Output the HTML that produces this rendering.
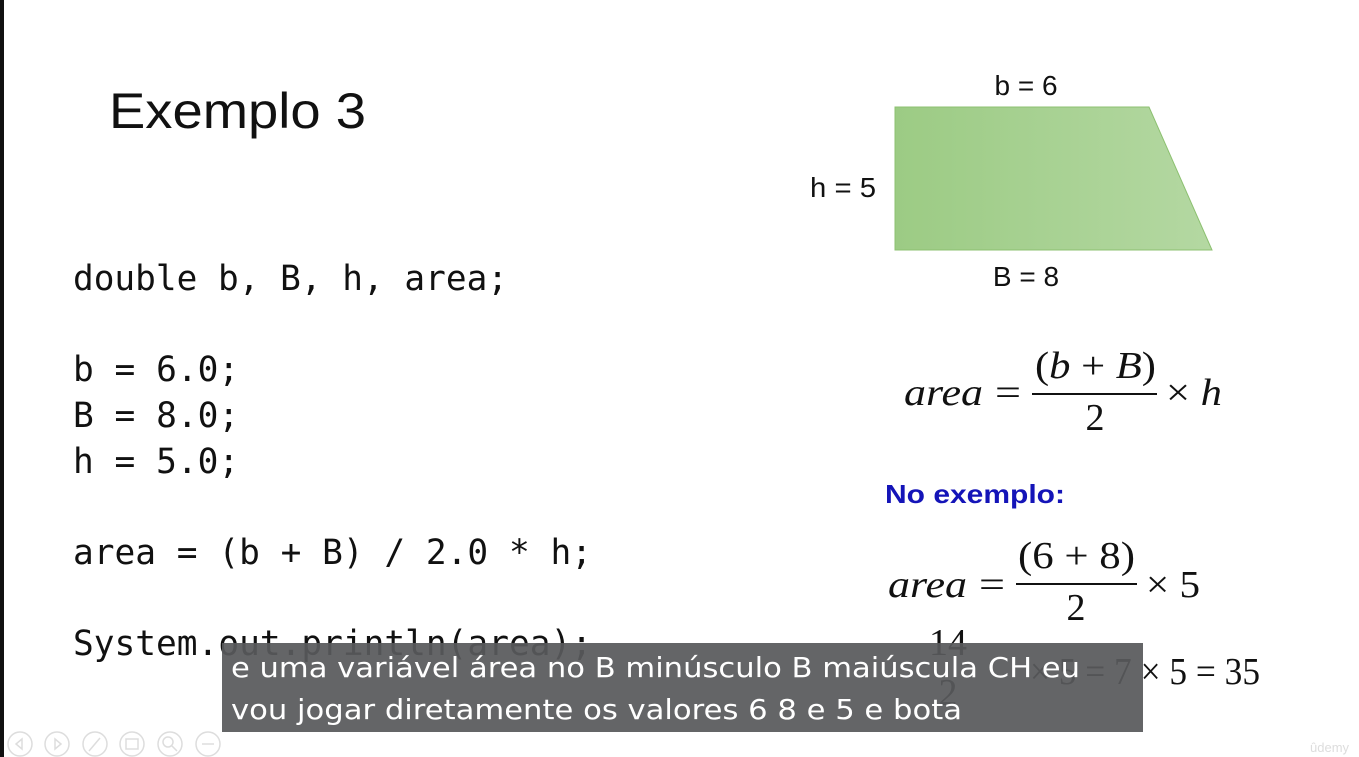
<!DOCTYPE html>
<html><head><meta charset="utf-8"><style>
html,body{margin:0;padding:0;background:#fff;width:1359px;height:757px;overflow:hidden}
svg{display:block}
</style></head><body>
<svg width="1359" height="757" viewBox="0 0 1359 757" xmlns="http://www.w3.org/2000/svg">
<defs><linearGradient id="g" x1="0" x2="1" y1="0" y2="0"><stop offset="0" stop-color="#9ccb84"/><stop offset="1" stop-color="#b4d8a2"/></linearGradient></defs>
<rect x="0" y="0" width="4" height="757" fill="#111"/>
<text x="109" y="128" font-family="Liberation Sans, sans-serif" font-size="50" fill="#111" textLength="257" lengthAdjust="spacingAndGlyphs">Exemplo 3</text>
<g font-family="DejaVu Sans Mono, monospace" font-size="34.5" fill="#111">
<text x="73" y="290" textLength="435" lengthAdjust="spacingAndGlyphs">double b, B, h, area;</text>
<text x="73" y="381">b = 6.0;</text>
<text x="73" y="427">B = 8.0;</text>
<text x="73" y="473">h = 5.0;</text>
<text x="73" y="564" textLength="519" lengthAdjust="spacingAndGlyphs">area = (b + B) / 2.0 * h;</text>
<text x="73" y="655" textLength="519" lengthAdjust="spacingAndGlyphs">System.out.println(area);</text>
</g>
<polygon points="895,107 1149,107 1212,250 895,250" fill="url(#g)" stroke="#8cc070" stroke-width="1"/>
<g font-family="Liberation Sans, sans-serif" font-size="28" fill="#111">
<text x="1026" y="95" text-anchor="middle">b = 6</text>
<text x="810" y="197" textLength="66" lengthAdjust="spacingAndGlyphs">h = 5</text>
<text x="1026" y="286" text-anchor="middle">B = 8</text>
</g>
<g font-family="Liberation Serif, serif" font-size="38" fill="#111">
<text x="904" y="405" font-style="italic" textLength="79" lengthAdjust="spacingAndGlyphs">area</text>
<text x="995" y="405" textLength="26" lengthAdjust="spacingAndGlyphs">=</text>
<text x="1035" y="378" textLength="121" lengthAdjust="spacingAndGlyphs">(<tspan font-style="italic">b</tspan> + <tspan font-style="italic">B</tspan>)</text>
<rect x="1032" y="393" width="125" height="2" fill="#111"/>
<text x="1095" y="430" text-anchor="middle">2</text>
<text x="1166" y="405" textLength="56" lengthAdjust="spacingAndGlyphs">× <tspan font-style="italic">h</tspan></text>
<text x="888" y="597" font-style="italic" textLength="79" lengthAdjust="spacingAndGlyphs">area</text>
<text x="979" y="597" textLength="26" lengthAdjust="spacingAndGlyphs">=</text>
<text x="1018" y="568" textLength="117" lengthAdjust="spacingAndGlyphs">(6 + 8)</text>
<rect x="1016" y="583" width="121" height="2" fill="#111"/>
<text x="1076" y="620" text-anchor="middle">2</text>
<text x="1146" y="597" textLength="54" lengthAdjust="spacingAndGlyphs">× 5</text>
<text x="948" y="655" text-anchor="middle">14</text>
<text x="948" y="705" text-anchor="middle">2</text>
<text x="1030" y="684" textLength="230" lengthAdjust="spacingAndGlyphs">× 5 = 7 × 5 = 35</text>
</g>
<text x="885" y="503" font-family="Liberation Sans, sans-serif" font-weight="bold" font-size="26" fill="#1414b8" textLength="180" lengthAdjust="spacingAndGlyphs">No exemplo:</text>
<rect x="222" y="643" width="921" height="89" fill="#58595b" fill-opacity="0.93"/>
<g font-family="DejaVu Sans, sans-serif" font-size="28" fill="#fff">
<text x="231" y="677" textLength="849" lengthAdjust="spacingAndGlyphs">e uma variável área no B minúsculo B maiúscula CH eu</text>
<text x="231" y="719" textLength="731" lengthAdjust="spacingAndGlyphs">vou jogar diretamente os valores 6 8 e 5 e bota</text>
</g>
<g fill="none" stroke="#ddd" stroke-width="1.5">
<circle cx="20" cy="744" r="12"/><circle cx="57" cy="744" r="12"/><circle cx="95" cy="744" r="12"/>
<circle cx="132" cy="744" r="12"/><circle cx="170" cy="744" r="12"/><circle cx="208" cy="744" r="12"/>
<path d="M22 739 L16 744 L22 749 Z"/><path d="M55 739 L61 744 L55 749 Z"/>
<path d="M89 751 L100 738"/><rect x="126" y="739" width="12" height="10"/>
<circle cx="168" cy="742" r="5"/><path d="M172 746 L177 751"/>
<path d="M202 744 h12"/>
</g>
<text x="1310" y="752" font-family="Liberation Sans, sans-serif" font-size="13" fill="#ddd">ûdemy</text>
</svg>
</body></html>
